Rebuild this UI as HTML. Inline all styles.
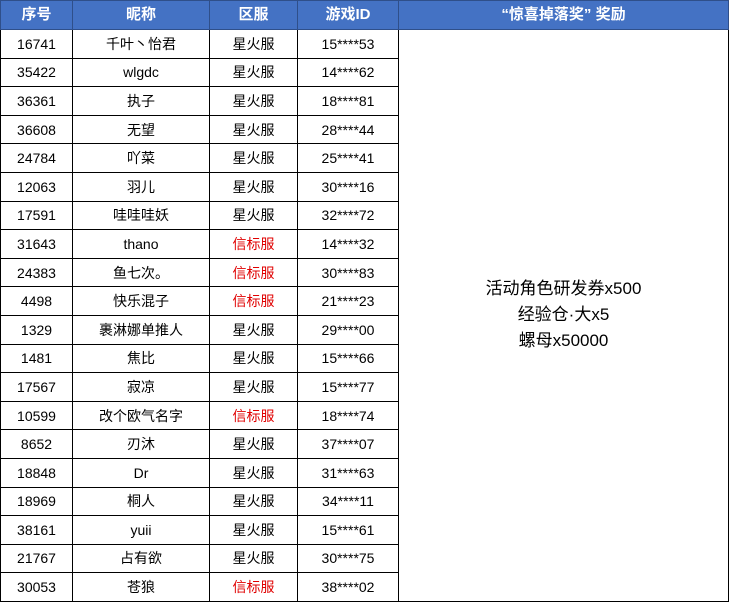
<!DOCTYPE html>
<html><head><meta charset="utf-8"><style>
body{margin:0;background:#fff;width:731px;height:603px;overflow:hidden}
table{position:absolute;left:0;top:0;border-collapse:collapse;table-layout:fixed;font-family:"Liberation Sans","Noto Sans CJK SC",sans-serif;font-size:14px;color:#000}
td,th{border:1px solid #000;text-align:center;padding:0;height:27.6px;line-height:16px;white-space:nowrap}
th{background:#4472C4;color:#fff;font-size:15px;font-weight:bold;height:28px;border-color:#2f4f8a}
.r{color:#e00000}
.big{font-size:17px;line-height:26px;vertical-align:middle}
</style></head><body>
<table>
<colgroup><col style="width:72px"><col style="width:137px"><col style="width:88px"><col style="width:101px"><col style="width:330px"></colgroup>
<tr><th>序号</th><th>昵称</th><th>区服</th><th>游戏ID</th><th>“惊喜掉落奖” 奖励</th></tr>
<tr><td>16741</td><td>千叶丶怡君</td><td>星火服</td><td>15****53</td><td rowspan="20" class="big">活动角色研发券x500<br>经验仓·大x5<br>螺母x50000</td></tr>
<tr><td>35422</td><td>wlgdc</td><td>星火服</td><td>14****62</td></tr>
<tr><td>36361</td><td>执子</td><td>星火服</td><td>18****81</td></tr>
<tr><td>36608</td><td>无望</td><td>星火服</td><td>28****44</td></tr>
<tr><td>24784</td><td>吖菜</td><td>星火服</td><td>25****41</td></tr>
<tr><td>12063</td><td>羽儿</td><td>星火服</td><td>30****16</td></tr>
<tr><td>17591</td><td>哇哇哇妖</td><td>星火服</td><td>32****72</td></tr>
<tr><td>31643</td><td>thano</td><td class="r">信标服</td><td>14****32</td></tr>
<tr><td>24383</td><td>鱼七次。</td><td class="r">信标服</td><td>30****83</td></tr>
<tr><td>4498</td><td>快乐混子</td><td class="r">信标服</td><td>21****23</td></tr>
<tr><td>1329</td><td>裹淋娜单推人</td><td>星火服</td><td>29****00</td></tr>
<tr><td>1481</td><td>焦比</td><td>星火服</td><td>15****66</td></tr>
<tr><td>17567</td><td>寂凉</td><td>星火服</td><td>15****77</td></tr>
<tr><td>10599</td><td>改个欧气名字</td><td class="r">信标服</td><td>18****74</td></tr>
<tr><td>8652</td><td>刃沐</td><td>星火服</td><td>37****07</td></tr>
<tr><td>18848</td><td>Dr</td><td>星火服</td><td>31****63</td></tr>
<tr><td>18969</td><td>桐人</td><td>星火服</td><td>34****11</td></tr>
<tr><td>38161</td><td>yuii</td><td>星火服</td><td>15****61</td></tr>
<tr><td>21767</td><td>占有欲</td><td>星火服</td><td>30****75</td></tr>
<tr><td>30053</td><td>苍狼</td><td class="r">信标服</td><td>38****02</td></tr>
</table>
</body></html>
